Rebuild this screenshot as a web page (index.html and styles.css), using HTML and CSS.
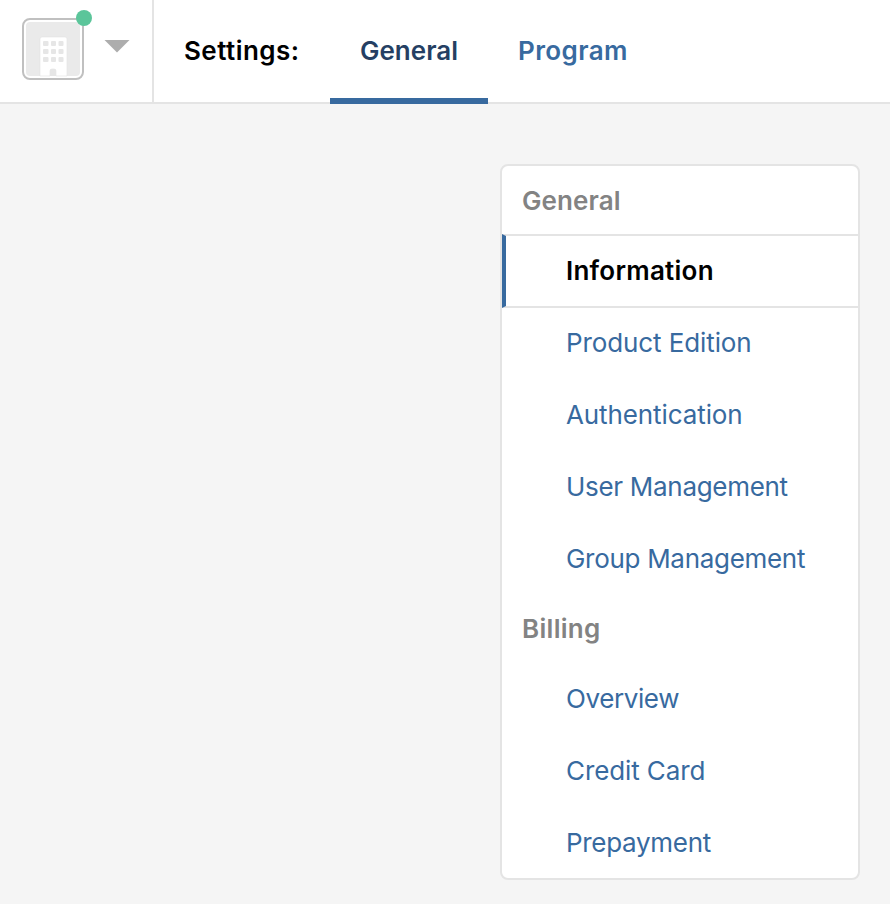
FILE: index.html
```html
<!DOCTYPE html>
<html lang="en">
<head>
<meta charset="utf-8">
<title>Settings</title>
<link rel="stylesheet" href="styles.css">
</head>
<body>
<header class="topbar">
  <div class="account">
    <div class="avatar">
      <svg width="62" height="62" viewBox="0 0 62 62">
        <rect x="1" y="1" width="60" height="60" rx="7" fill="#fff" stroke="#c0c0c0" stroke-width="2"/>
        <rect x="4" y="4" width="54" height="54" rx="4" fill="#eaeaea"/>
        <path d="M18 58V21q0-2 2-2h23q2 0 2 2v37H34v-5q0-2-2-2h-2q-2 0-2 2v5z" fill="#fff" stroke="#e3e3e3" stroke-width=".6"/>
        <g fill="#e6e6e6">
          <rect x="21" y="23" width="5.500" height="5" rx="1"/><rect x="29" y="23" width="5" height="5" rx="1"/><rect x="36.500" y="23" width="5" height="5" rx="1"/>
          <rect x="21" y="31" width="5.500" height="5" rx="1"/><rect x="29" y="31" width="5" height="5" rx="1"/><rect x="36.500" y="31" width="5" height="5" rx="1"/>
          <rect x="21" y="39" width="5.500" height="5" rx="1"/><rect x="29" y="39" width="5" height="5" rx="1"/><rect x="36.500" y="39" width="5" height="5" rx="1"/>
          <path d="M28 58v-5q0-2 2-2h2q2 0 2 2v5z"/>
        </g>
      </svg>
      <span class="status"></span>
    </div>
    <svg class="caret" width="26" height="13" viewBox="0 0 26 13"><path d="M.5 0h25L13 12.500z" fill="#adadad"/></svg>
  </div>
  <div class="title">Settings:</div>
  <nav class="tabs">
    <a class="tab active">General</a>
    <a class="tab wide">Program</a>
  </nav>
</header>
<main class="content">
  <aside class="menu">
    <h2 class="heading">General</h2>
    <a class="item current">Information</a>
    <a class="item snug">Product Edition</a>
    <a class="item snug">Authentication</a>
    <a class="item tight">User Management</a>
    <a class="item tight">Group Management</a>
    <h2 class="heading billing">Billing</h2>
    <a class="item tighter">Overview</a>
    <a class="item snug">Credit Card</a>
    <a class="item tight">Prepayment</a>
  </aside>
</main>
</body>
</html>
```
FILE: styles.css
```css
* { box-sizing: border-box; }
body { margin: 0; height: 904px; background: #f5f5f5; font: 26px/36px Inter, sans-serif; color: #386a9f; }
.topbar { display: flex; height: 104px; background: #fff; border-bottom: 2px solid #e4e4e4; }
.account { display: flex; width: 154px; padding: 18px 0 0 22px; border-right: 2px solid #e4e4e4; }
.avatar { position: relative; width: 62px; height: 62px; }
.status { position: absolute; left: 54px; top: -8px; width: 16px; height: 16px; border-radius: 50%; background: #5bc59a; }
.caret { margin: 22px 0 0 20px; }
.title { width: 176px; padding: 33px 0 0 30px; font-weight: 600; color: #000; letter-spacing: 0.45px; }
.tabs { display: flex; font-weight: 600; }
.tab { height: 104px; padding: 33px 30px 0; }
.tab.active { width: 158px; color: #253f63; border-bottom: 6px solid #386a9f; }
.tab.wide { letter-spacing: 0.4px; }
.content { display: flex; justify-content: flex-end; padding: 60px 30px 0 0; }
.menu { width: 360px; height: 716px; background: #fff; border: 2px solid #e4e4e4; border-radius: 8px; }
.heading { margin: 0; height: 68px; padding: 17px 20px; font-size: 26px; line-height: 36px; font-weight: 600; color: #838383; letter-spacing: 0.1px; }
.billing { padding-top: 16px; letter-spacing: 0.3px; }
.item { display: flex; align-items: center; height: 72px; padding-left: 64px; }
.item.current { height: 73px; padding: 0 0 1px 60px; color: #000; font-weight: 600; letter-spacing: 0.25px; border: 2px solid #e4e4e4; border-width: 2px 0; border-left: 4px solid #386a9f; height: 74px; margin-bottom: -1px; }
.snug { letter-spacing: -0.1px; }
.tight { letter-spacing: -0.3px; }
.tighter { letter-spacing: -0.4px; }
```
